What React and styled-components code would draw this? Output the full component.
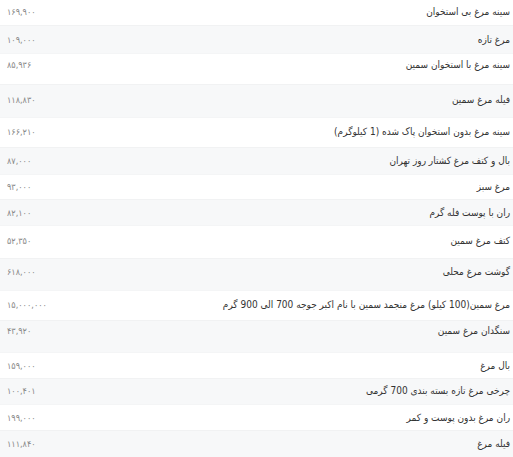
import React from "react";
import styled, { createGlobalStyle } from "styled-components";

const GlobalStyle = createGlobalStyle`
  html, body {
    margin: 0;
    padding: 0;
    background: #fff;
  }
  body {
    font-family: "DejaVu Sans Condensed", "DejaVu Sans", sans-serif;
  }
`;

const Table = styled.div`
  width: 513px;
  direction: rtl;
  display: flex;
  flex-direction: column;
`;

const Row = styled.div`
  display: flex;
  justify-content: space-between;
  align-items: flex-start;
  box-sizing: border-box;
  height: ${(props) => props.h}px;
  padding: ${(props) => props.pt}px 3px 0 7px;
  background: ${(props) => (props.odd ? "#f7f8f9" : "#ffffff")};
  border-top: 1px solid ${(props) => (props.odd ? "#f1f2f3" : "#f4f5f6")};
  &:first-child {
    border-top: none;
  }
`;

const Name = styled.div`
  font-size: 10px;
  line-height: 14px;
  color: #333;
  white-space: nowrap;
`;

const Price = styled.div`
  font-size: 9px;
  line-height: 14px;
  color: #888;
  direction: ltr;
  text-align: left;
  white-space: nowrap;
`;

const rows = [
  ["سینه مرغ بی استخوان", "۱۶۹,۹۰۰", 25, 5],
  ["مرغ تازه", "۱۰۹,۰۰۰", 28, 7],
  ["سینه مرغ با استخوان سمین", "۸۵,۹۳۶", 31, 4],
  ["فیله مرغ سمین", "۱۱۸,۸۳۰", 33, 8],
  ["سینه مرغ بدون استخوان پاک شده (1 کیلوگرم)", "۱۶۶,۲۱۰", 30, 7],
  ["بال و کتف مرغ کشتار روز تهران", "۸۷,۰۰۰", 27, 6],
  ["مرغ سبز", "۹۳,۰۰۰", 25, 5],
  ["ران با پوست فله گرم", "۸۲,۱۰۰", 26, 6],
  ["کتف مرغ سمین", "۵۲,۳۵۰", 33, 8],
  ["گوشت مرغ محلی", "۶۱۸,۰۰۰", 32, 6],
  ["مرغ سمین(100 کیلو) مرغ منجمد سمین با نام اکبر جوجه 700 الی 900 گرم", "۱۵,۰۰۰,۰۰۰", 30, 7],
  ["سنگدان مرغ سمین", "۴۳,۹۲۰", 32, 3],
  ["بال مرغ", "۱۵۹,۰۰۰", 26, 6],
  ["چرخی مرغ تازه بسته بندی 700 گرمی", "۱۰۰,۴۰۱", 26, 5],
  ["ران مرغ بدون پوست و کمر", "۱۹۹,۰۰۰", 26, 6],
  ["فیله مرغ", "۱۱۱,۸۴۰", 27, 6],
];

const App = () => {
  return (
    <>
      <GlobalStyle />
      <Table>
        {rows.map(([name, price, h, pt], i) => (
          <Row key={i} h={h} pt={pt} odd={i % 2 === 1}>
            <Name>{name}</Name>
            <Price>{price}</Price>
          </Row>
        ))}
      </Table>
    </>
  );
};

export default App;
